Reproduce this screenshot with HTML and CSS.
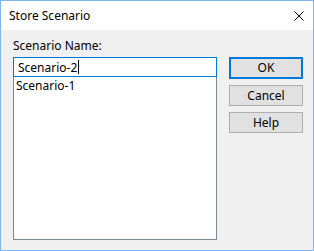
FILE: index.html
```html
<!DOCTYPE html>
<html lang="en">
	<head>
		<meta charset="UTF-8">
		<title>Store Scenario</title>
		<link rel="stylesheet" href="styles.css">
	</head>
	<body>
		<div class="dialog">
			<!--标题栏-->
			<div class="titlebar">
				<span class="title">Store Scenario</span>
				<span class="close">
					<svg width="10" height="10" viewBox="0 0 10 10">
						<path d="M0.5 0.5 L9.5 9.5 M9.5 0.5 L0.5 9.5" stroke="#000" stroke-width="1" fill="none" />
					</svg>
				</span>
			</div>
			<div class="content">
				<div class="left">
					<div class="label">Scenario Name:</div>
					<div class="textbox">Scenario-2<span class="caret"></span></div>
					<ul class="list">
						<li>Scenario-1</li>
					</ul>
				</div>
				<div class="buttons">
					<div class="btn default">OK</div>
					<div class="btn">Cancel</div>
					<div class="btn">Help</div>
				</div>
			</div>
		</div>
	</body>
</html>
```

FILE: styles.css
```css
* {
	margin: 0;
	padding: 0;
	box-sizing: border-box;
}

ul {
	list-style: none;
}

body {
	font-family: "Noto Sans", "Open Sans", sans-serif;
	font-size: 12px;
	color: #000;
	background: #fff;
}

.dialog {
	width: 314px;
	height: 251px;
	border: 1px solid #7fb5ea;
	background-color: #f0f0f0;
	display: flex;
	flex-direction: column;
}

.titlebar {
	height: 29px;
	background-color: #fff;
	display: flex;
	align-items: center;
	justify-content: space-between;
	padding: 0 9px 0 8px;
}

.title {
	font-size: 12px;
	line-height: 16px;
}

.close {
	width: 10px;
	height: 10px;
	display: flex;
}

.content {
	flex: 1;
	display: flex;
	padding: 8px 10px 10px 12px;
}

.left {
	width: 204px;
	display: flex;
	flex-direction: column;
}

.label {
	line-height: 15px;
	height: 15px;
	margin-bottom: 4px;
}

.textbox {
	height: 20px;
	border: 1px solid #0078d7;
	background-color: #fff;
	padding-left: 4px;
	line-height: 17px;
	display: flex;
	align-items: center;
}

.caret {
	display: inline-block;
	width: 1px;
	height: 14px;
	background-color: #000;
	margin-left: 1px;
}

.list {
	flex: 1;
	border: 1px solid #828790;
	border-top: none;
	background-color: #fff;
	padding: 1px 2px;
}

.list li {
	line-height: 15px;
}

.buttons {
	margin-left: 12px;
	padding-top: 19px;
	display: flex;
	flex-direction: column;
	gap: 6px;
}

.btn {
	width: 74px;
	height: 21px;
	border: 1px solid #adadad;
	background-color: #e1e1e1;
	text-align: center;
	line-height: 19px;
}

.btn.default {
	height: 22px;
	border: 2px solid #0078d7;
	line-height: 18px;
}
```
